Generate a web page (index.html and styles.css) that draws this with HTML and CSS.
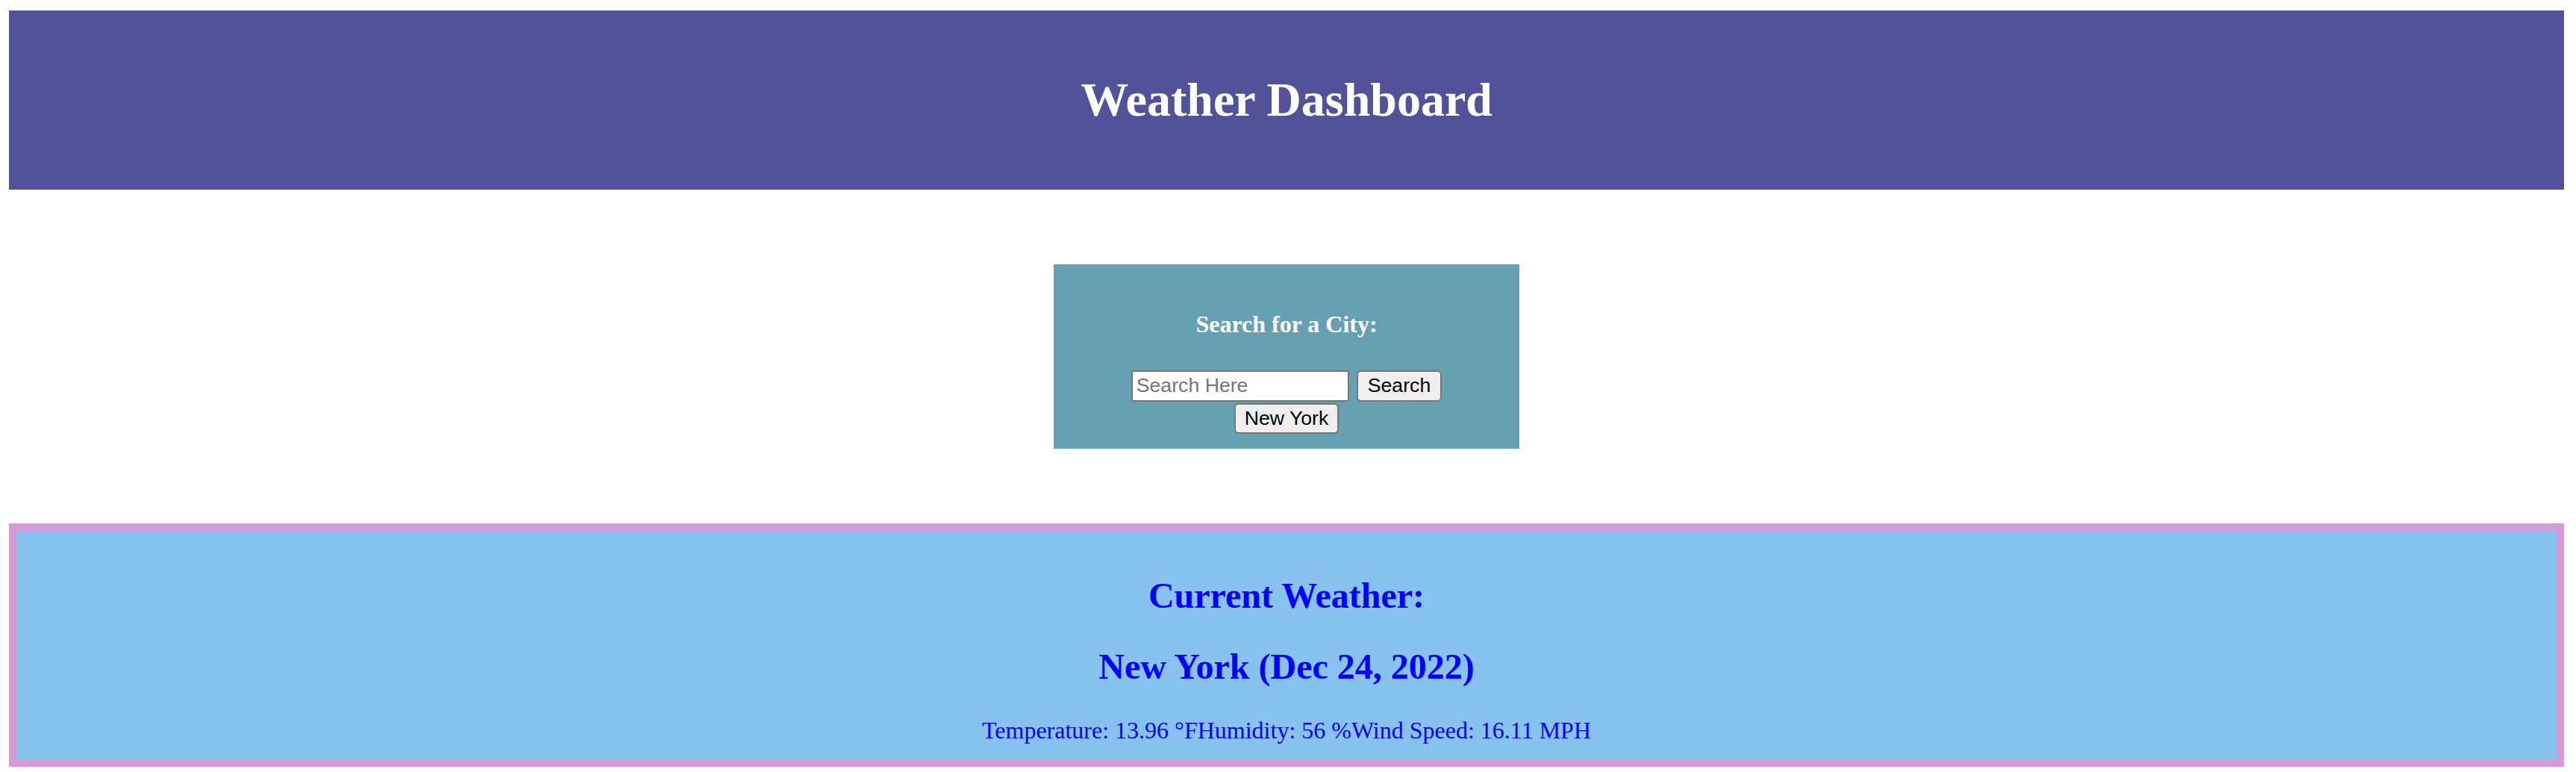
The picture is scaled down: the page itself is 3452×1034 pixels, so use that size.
FILE: index.html
```html
<!DOCTYPE html>
<html lang="en">
<head>
<meta charset="utf-8">
<title>Weather Dashboard</title>
<link rel="stylesheet" href="styles.css">
</head>
<body>
  <header class="header">
    <h1 class="header-title">Weather Dashboard</h1>
  </header>

  <section class="search">
    <h4 class="search-title">Search for a City:</h4>
    <div class="search-row">
      <input class="search-input" type="text" placeholder="Search Here">
      <button class="btn" type="button">Search</button>
    </div>
    <div class="history-row">
      <button class="btn btn-history" type="button">New York</button>
    </div>
  </section>

  <section class="current">
    <h2 class="current-title">Current Weather:</h2>
    <h2 class="current-title">New York (Dec 24, 2022)</h2>
    <div class="current-stats"><span>Temperature: 13.96 °F</span><span>Humidity: 56 %</span><span>Wind Speed: 16.11 MPH</span></div>
  </section>
</body>
</html>
```

FILE: styles.css
```css
html {
  background: #ffffff;
}

body {
  margin: 14px 16px 0 12px;
  font-family: "Liberation Serif", "Times New Roman", Times, serif;
  font-size: 32px;
  line-height: 1.15;
  color: #000000;
}

.header {
  background: #51529a;
  padding: 40px;
  text-align: center;
}

.header-title {
  margin: 43px 0;
  font-size: 64px;
  line-height: 1.15;
  font-weight: bold;
  color: #ffffff;
}

.search {
  width: 584px;
  margin: 100px auto;
  padding: 20px;
  background: #66a1b3;
  text-align: center;
}

.search-title {
  margin: 42.5px 0;
  font-size: 32px;
  line-height: 37px;
  font-weight: bold;
  color: #ffffff;
}

.search-row {
  display: flex;
  justify-content: center;
  align-items: center;
  gap: 10px;
  height: 42px;
}

.history-row {
  display: flex;
  justify-content: center;
  margin-top: 2px;
}

.search-input {
  box-sizing: border-box;
  width: 292px;
  height: 42px;
  margin: 0;
  padding: 0 5px;
  border: 2px solid #767676;
  border-radius: 3px;
  background: #ffffff;
  font-family: "Liberation Sans", Arial, Helvetica, sans-serif;
  font-size: 26.67px;
  color: #000000;
}

.search-input::placeholder {
  color: #757575;
  opacity: 1;
}

.btn {
  box-sizing: border-box;
  height: 42px;
  margin: 0;
  padding: 0 13px;
  border: 2px solid #767676;
  border-radius: 6px;
  background: #efefef;
  font-family: "Liberation Sans", Arial, Helvetica, sans-serif;
  font-size: 26.67px;
  color: #000000;
}

.btn-history {
  height: 41px;
  padding: 0 12px;
}

.current {
  margin-top: 100px;
  padding: 20px;
  border: 10px solid #d69ad6;
  background: #88c3ef;
  text-align: center;
  color: #0000ff;
}

.current-title {
  margin: 39.84px 0;
  font-size: 48px;
  line-height: 1.15;
  font-weight: bold;
}

.current-stats {
  font-size: 32px;
  line-height: 1.15;
}
```
